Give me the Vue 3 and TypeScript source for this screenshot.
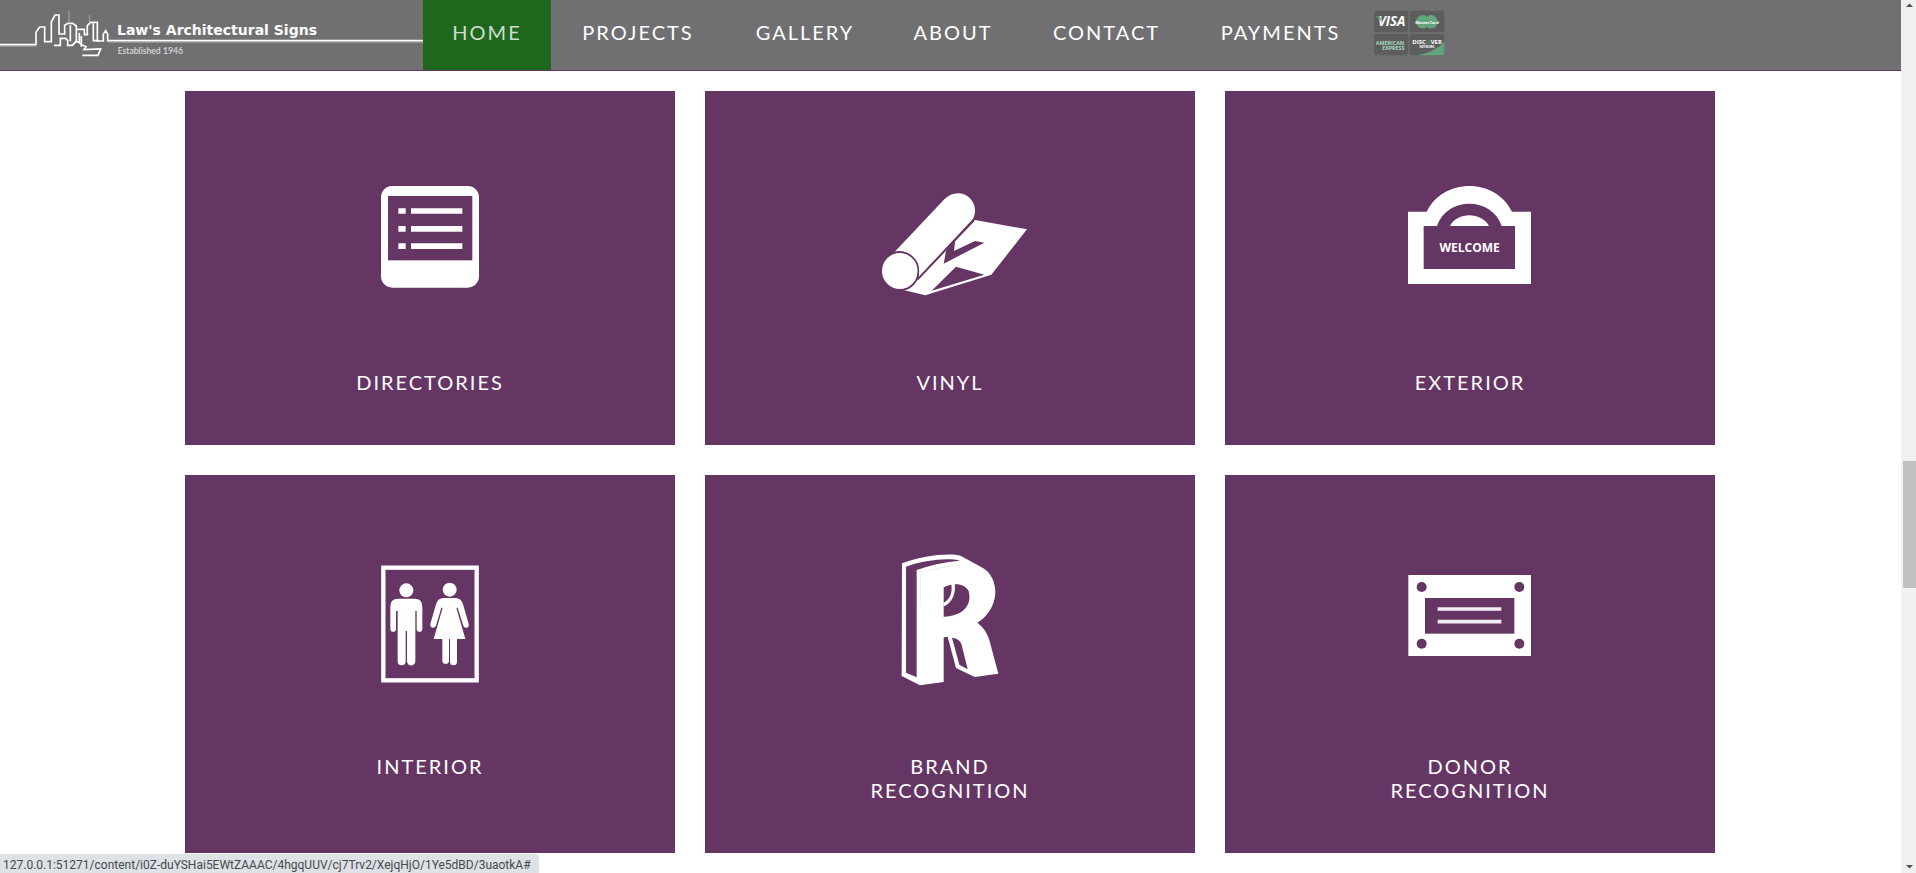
<script setup lang="ts">
interface NavItem {
  label: string
  active?: boolean
}

interface Service {
  id: string
  lines: string[]
  viewBox: string
}

const navItems: NavItem[] = [
  { label: 'HOME', active: true },
  { label: 'PROJECTS' },
  { label: 'GALLERY' },
  { label: 'ABOUT' },
  { label: 'CONTACT' },
  { label: 'PAYMENTS' },
]

const services: Service[] = [
  { id: 'directories', lines: ['DIRECTORIES'], viewBox: '30 -39 480 480' },
  { id: 'vinyl', lines: ['VINYL'], viewBox: '30 -39 480 480' },
  { id: 'exterior', lines: ['EXTERIOR'], viewBox: '30 -39 480 480' },
  { id: 'interior', lines: ['INTERIOR'], viewBox: '0 3 480 480' },
  { id: 'brand', lines: ['BRAND', 'RECOGNITION'], viewBox: '60 3 480 480' },
  { id: 'donor', lines: ['DONOR', 'RECOGNITION'], viewBox: '60 -27 480 480' },
]

const statusUrl = '127.0.0.1:51271/content/i0Z-duYSHai5EWtZAAAC/4hgqUUV/cj7Trv2/XejqHjO/1Ye5dBD/3uaotkA#'
</script>

<template>
  <div class="page">
    <header class="header">
      <a href="#" class="logo" aria-label="Law's Architectural Signs">
        <svg viewBox="0 0 1269 210" class="logo-art">
          <path class="rule-shade" d="M325 127H1269M0 139H108" />
          <g class="skyline">
            <path d="M0 134H108V97L119 81H134V125H154V66L165 45H177V102H194V76L204 70H218L229 78V124" />
            <path d="M211 76V124M229 88H253V104H262V77L272 67H292V123H310V103L317 92L323 103V122H1269" />
            <path d="M280 70V122H296" />
            <path d="M162 136H181V115H197L203 121V136H217L228 124L238 128L244 134L258 140L252 149L302 147L294 166H247" />
            <path d="M238 98V126M244 108V140" />
          </g>
          <path class="antenna" d="M207 33V70M269 45V68" />
          <text x="351" y="105" class="logo-name">Law's Architectural Signs</text>
          <text x="353" y="161" class="logo-since">Established 1946</text>
        </svg>
      </a>
      <nav class="nav" aria-label="Main">
        <a
          v-for="item in navItems"
          :key="item.label"
          href="#"
          class="nav-link"
          :class="{ active: item.active }"
        >{{ item.label }}</a>
      </nav>
      <svg class="cards-accepted" viewBox="1182 30 213 138" role="img" aria-label="Accepted payment cards">
        <g fill="#5d5d5e">
          <rect x="1182" y="32" width="103" height="65" rx="7" />
          <rect x="1289" y="32" width="104" height="65" rx="7" />
          <rect x="1182" y="102" width="103" height="64" rx="7" />
          <rect x="1289" y="102" width="104" height="64" rx="7" />
        </g>
        <text x="1235" y="79" class="visa">VISA</text>
        <path d="M1187 49H1200L1204 63Z" fill="#62a57c" />
        <g fill="#62a57c">
          <circle cx="1328" cy="65" r="20" />
          <circle cx="1353" cy="65" r="20" />
        </g>
        <text x="1341" y="71" class="mastercard">MasterCard</text>
        <text x="1230" y="134" class="amex">AMERICAN</text>
        <text x="1240" y="150" class="amex">EXPRESS</text>
        <path d="M1308 166C1345 160 1375 146 1393 125V159Q1393 166 1386 166Z" fill="#62a57c" />
        <text x="1297" y="133" class="discover">DISC<tspan fill="#4d8062">O</tspan>VER</text>
        <text x="1341" y="144" class="network">NETWORK</text>
      </svg>
    </header>

    <main class="services">
      <a v-for="service in services" :key="service.id" href="#" class="card">
        <svg class="card-icon" :viewBox="service.viewBox" aria-hidden="true">
          <template v-if="service.id === 'directories'">
            <rect class="w" x="123" y="48" width="294" height="305" rx="34" />
            <rect class="p" x="144" y="78" width="253" height="193" />
            <path class="w" d="M175 115h22v16h-22zM213 115h154v16h-154zM175 168h22v17h-22zM213 168h154v17h-154zM175 220h22v17h-22zM213 220h154v17h-154z" />
          </template>
          <template v-else-if="service.id === 'vinyl'">
            <path class="w" d="M345 150L501 178L394 314L196 376L130 360Q158 354 174 328Z" />
            <path class="p" d="M286 208L282 243L345 213L373 218L251 281L258 243ZM288 290L373 314L215 362Z" />
            <path class="w" d="M103 247L253 88C275 64 311 64 331 86C348 104 349 130 338 148L176 321C182 280 156 246 120 245Z" />
            <path class="seam" d="M341 152L173 328" />
            <circle class="w" cx="120" cy="303" r="54" />
            <path class="seam" d="M103 247C145 240 177 269 175 306C174 333 154 356 128 360" />
          </template>
          <template v-else-if="service.id === 'exterior'">
            <path class="w" d="M84 125H140C165 75 215 48 268 48S371 75 396 125H453V342H84Z" />
            <path class="p" d="M131 168H171C185 125 225 101 268 101S351 125 365 168H405V297H131Z" />
            <path class="w" d="M210 168C220 147 245 136 268 136S316 147 327 168Z" />
            <text class="welcome" x="269" y="247">WELCOME</text>
          </template>
          <template v-else-if="service.id === 'interior'">
            <rect class="frame" x="100" y="83" width="280" height="338" />
            <circle class="w" cx="169" cy="151" r="21" />
            <path class="w" d="M144 176H194Q217 176 217 200V267A8.500 8.500 0 0 1 200 267V213H196V364A12.500 12.500 0 0 1 171 364V273H167V364A12 12 0 0 1 143 364V213H138V267A8.500 8.500 0 0 1 121 267V200Q121 176 144 176Z" />
            <circle class="w" cx="299" cy="149" r="21" />
            <path class="w" d="M280 174H317Q333 174 339 193L356 252Q358 260 351 263Q343 265 340 257L323 203H319L346 297H321V365A10.500 10.500 0 0 1 300 365V297H297V365A10.500 10.500 0 0 1 277 365V297H251L278 203H274L258 257Q254 265 246 263Q239 259 241 252L258 193Q264 174 280 174Z" />
          </template>
          <template v-else-if="service.id === 'brand'">
            <path class="w" d="M156 70C220 46 300 38 333 48L392 80C425 95 436 130 436 155C436 200 405 235 382 248C402 262 414 285 418 300L445 401L374 411L318 384L293 290L281 292V426L210 436L155 408Z" />
            <path class="p" d="M168 80C220 62 290 52 330 62C285 66 240 75 200 90V412L168 398Z" />
            <path class="p" d="M281 142C310 128 344 128 356 154C367 194 340 229 281 230Z" />
            <path class="inner-edge" d="M309 132C313 162 301 184 281 194" />
            <path class="p" d="M306 293C322 295 331 301 335 315L353 388L328 374Z" />
            <path class="crease" d="M211 200V98Q270 79 330 76" />
          </template>
          <template v-else>
            <rect class="w" x="115" y="75" width="368" height="243" />
            <rect class="p" x="165" y="144" width="268" height="107" />
            <circle class="p" cx="155" cy="111" r="15" />
            <circle class="p" cx="448" cy="111" r="15" />
            <circle class="p" cx="155" cy="281" r="15" />
            <circle class="p" cx="448" cy="281" r="15" />
            <path class="plaque-lines" d="M203 177H394M203 215H394" />
          </template>
        </svg>
        <span class="card-label">
          <span v-for="line in service.lines" :key="line">{{ line }}</span>
        </span>
      </a>
    </main>

    <div class="scrollbar" aria-hidden="true">
      <svg class="arrow" viewBox="0 0 15 17"><path d="M5 7L8.500 3.500L12 7Z" /></svg>
      <div class="track-before"></div>
      <div class="thumb"></div>
      <div class="track-after"></div>
      <svg class="arrow" viewBox="0 0 15 17"><path d="M5 9L8.500 12.500L12 9Z" /></svg>
    </div>

    <div class="status">{{ statusUrl }}</div>
  </div>
</template>

<style>
body {
  margin: 0;
  background: #fff;
}
</style>

<style scoped>
.page {
  box-sizing: border-box;
  min-height: 100vh;
  padding-right: 15px;
  font-family: Lato, "Liberation Sans", sans-serif;
}

a {
  color: inherit;
  text-decoration: none;
}

.header {
  display: flex;
  height: 70px;
  background: #707072;
  border-bottom: 1px solid #653663;
  color: #fff;
}

.logo {
  flex: 0 0 423px;
}

.logo-art {
  display: block;
  width: 423px;
  height: 70px;
}

.skyline {
  fill: none;
  stroke: #fff;
  stroke-width: 5;
}

.rule-shade {
  fill: none;
  stroke: #929294;
  stroke-width: 4;
}

.antenna {
  fill: none;
  stroke: #a8a8a9;
  stroke-width: 3;
}

.logo-name {
  fill: #fff;
  font: bold 42px "DejaVu Sans", sans-serif;
}

.logo-since {
  fill: #e4e4e4;
  font: 26px Lato, sans-serif;
}

.nav {
  display: grid;
  grid-template-columns: 128px 174px 160px 136px 171px 177px;
}

.nav-link {
  padding-top: 20px;
  font-size: 20px;
  line-height: 24px;
  letter-spacing: 2px;
  text-align: center;
}

.nav-link.active {
  background: #1e681e;
  color: #cfdccf;
}

.cards-accepted {
  width: 71px;
  height: 46px;
  margin: 10px 0 0 5px;
}

.cards-accepted text {
  fill: #fff;
  font-family: "Open Sans", sans-serif;
  font-weight: bold;
  text-anchor: middle;
}

.cards-accepted .visa {
  font-size: 40px;
  font-style: italic;
}

.cards-accepted .mastercard {
  font-size: 12px;
}

.cards-accepted .amex {
  fill: #a9dbbd;
  font-size: 16px;
}

.cards-accepted .discover {
  font-size: 18px;
  text-anchor: start;
}

.cards-accepted .network {
  font-size: 9px;
}

.services {
  display: grid;
  grid-template-columns: repeat(3, 1fr);
  gap: 30px;
  max-width: 1530px;
  margin: 0 auto;
  padding: 20px 1px 20px 0;
}

.card {
  display: flex;
  flex-direction: column;
  align-items: center;
  padding: 66px 0 51px;
  background: #653663;
  color: #fff;
}

.card-icon {
  width: 160px;
  height: 160px;
  margin-bottom: 53px;
}

.w {
  fill: #fff;
}

.p {
  fill: #653663;
}

.seam {
  fill: none;
  stroke: #653663;
  stroke-width: 5;
}

.frame {
  fill: none;
  stroke: #fff;
  stroke-width: 13;
}

.inner-edge {
  fill: none;
  stroke: #fff;
  stroke-width: 10;
}

.crease {
  fill: none;
  stroke: #e9e3e9;
  stroke-width: 2;
}

.plaque-lines {
  fill: none;
  stroke: #f3eef3;
  stroke-width: 11;
}

.welcome {
  fill: #fff;
  font: bold 36px "Open Sans", sans-serif;
  text-anchor: middle;
}

.card-label {
  display: flex;
  flex-direction: column;
  font-size: 20px;
  line-height: 24px;
  letter-spacing: 2px;
  text-align: center;
}

.scrollbar {
  position: fixed;
  top: 0;
  right: 0;
  bottom: 0;
  display: flex;
  flex-direction: column;
  width: 15px;
  background: #f1f1f1;
}

.arrow {
  width: 15px;
  height: 17px;
  fill: #505050;
}

.track-before {
  flex: 444;
}

.thumb {
  flex: 127;
  margin-left: 2px;
  background: #c1c1c1;
}

.track-after {
  flex: 268;
}

.status {
  position: fixed;
  bottom: 0;
  left: 0;
  box-sizing: border-box;
  height: 19px;
  padding: 0 8px 0 3px;
  background: #dee1e6;
  border-top-right-radius: 4px;
  color: #46494d;
  font: 12px/23px Roboto, sans-serif;
  white-space: nowrap;
}
</style>
